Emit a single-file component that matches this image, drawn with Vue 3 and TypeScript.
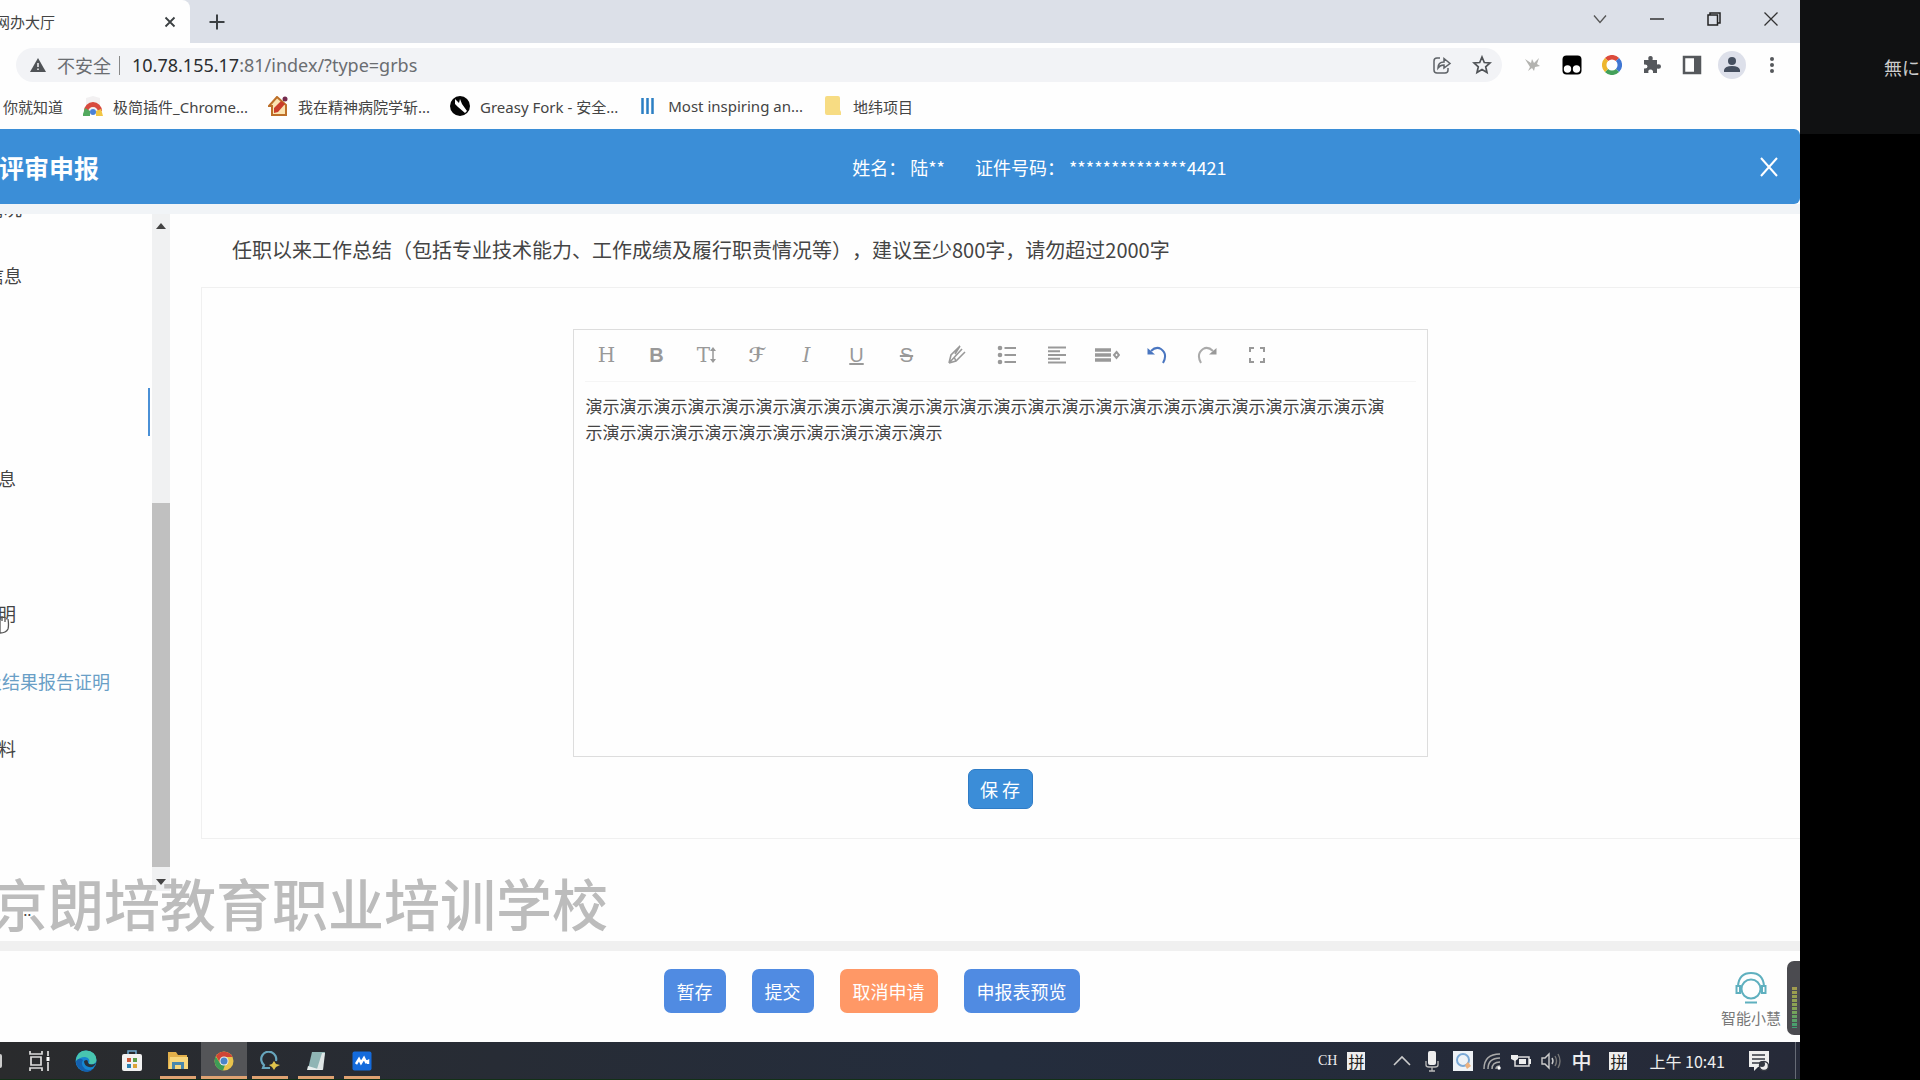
<script setup lang="ts">
import { ref } from 'vue'

interface MenuItem {
  text: string
  tone?: 'linked' | 'active'
  short?: boolean
}

const menu: MenuItem[] = [
  { text: '情况' },
  { text: '信息' },
  { text: '' },
  { text: '', tone: 'active' },
  { text: '息', short: true },
  { text: '' },
  { text: '明', short: true },
  { text: '及结果报告证明', tone: 'linked' },
  { text: '料', short: true },
]

const summary = ref('演示'.repeat(34))

const actions = [
  { label: '暂存', kind: 'primary' },
  { label: '提交', kind: 'primary' },
  { label: '取消申请', kind: 'warn' },
  { label: '申报表预览', kind: 'primary' },
]
</script>

<template>
  <div class="desktop">
    <div class="screen">
      <div class="tabs">
        <div class="tab">
          <span class="tab-title">网办大厅</span>
          <button class="bare tab-close" aria-label="关闭标签页">
            <svg width="12" height="12" viewBox="0 0 12 12"><path d="M1.500 1.500 10.500 10.500M10.500 1.500 1.500 10.500" stroke="#3c4043" stroke-width="1.800" /></svg>
          </button>
        </div>
        <button class="bare new-tab" aria-label="新标签页">
          <svg width="16" height="16" viewBox="0 0 16 16"><path d="M8 0.500V15.500M0.500 8H15.500" stroke="#3c4043" stroke-width="2" /></svg>
        </button>
        <div class="window-controls">
          <button class="bare" aria-label="搜索标签页">
            <svg width="14" height="14" viewBox="0 0 14 14"><path d="M1 3.500 7 10.500 13 3.500" fill="none" stroke="#555" stroke-width="1.300" /></svg>
          </button>
          <button class="bare" aria-label="最小化">
            <svg width="14" height="14" viewBox="0 0 14 14"><path d="M0 7H14" stroke="#333" stroke-width="1.500" /></svg>
          </button>
          <button class="bare" aria-label="还原">
            <svg width="14" height="14" viewBox="0 0 14 14"><path d="M1 3H10.500V13H1ZM3 3V1H13V11H10.500" fill="none" stroke="#222" stroke-width="1.500" /></svg>
          </button>
          <button class="bare" aria-label="关闭">
            <svg width="14" height="14" viewBox="0 0 14 14"><path d="M0.500 0.500 13.500 13.500M13.500 0.500 0.500 13.500" stroke="#333" stroke-width="1.300" /></svg>
          </button>
        </div>
      </div>

      <div class="toolbar">
        <div class="omnibox">
          <svg class="warn-icon" width="16" height="14" viewBox="0 0 16 14"><path d="M8 0 16 14H0Z" fill="#505357" /><path d="M8 5V9M8 10.500V12" stroke="#f3f4f6" stroke-width="1.500" /></svg>
          <span class="insecure">不安全</span>
          <span class="divider"></span>
          <span class="url"><b>10.78.155.17</b>:81/index/?type=grbs</span>
          <button class="bare share" aria-label="分享">
            <svg width="20" height="20" viewBox="0 0 20 20" fill="none" stroke="#5f6368" stroke-width="1.500"><path d="M8 3H5Q2 3 2 6V15Q2 18 5 18H13Q16 18 16 15V13" /><path d="M6 13Q6 7 12 7V3.500L18 8.500 12 13V10Q8 10 6 13Z" /></svg>
          </button>
          <button class="bare" aria-label="收藏">
            <svg width="20" height="20" viewBox="0 0 20 20" fill="none" stroke="#505357" stroke-width="1.700"><path d="M10 2 12.300 7.500 18 8 13.700 11.800 15 17.500 10 14.500 5 17.500 6.300 11.800 2 8 7.700 7.500Z" /></svg>
          </button>
        </div>
        <div class="extensions">
          <button class="bare" aria-label="扩展">
            <svg width="20" height="20" viewBox="0 0 20 20"><path d="M3 4 9 8 10 4 12 8 17 3 15 9 18 11 13 12 12 16 10 13 6 16 8 12Z" fill="#b3b3b0" /></svg>
          </button>
          <button class="bare" aria-label="脚本管理">
            <svg width="20" height="20" viewBox="0 0 20 20"><rect x="0.500" y="0.500" width="19" height="19" rx="4" fill="#000" /><circle cx="5.500" cy="14" r="3.700" fill="#fff" /><circle cx="14.500" cy="14" r="3.700" fill="#fff" /></svg>
          </button>
          <button class="bare" aria-label="彩环">
            <svg width="20" height="20" viewBox="0 0 20 20" fill="none" stroke-width="4.500"><path d="M4.500 4.500A7.700 7.700 0 0 1 15.500 4.500" stroke="#dc4b3c" /><path d="M15.500 4.500A7.700 7.700 0 0 1 15.500 15.500" stroke="#3f76d3" /><path d="M15.500 15.500A7.700 7.700 0 0 1 4.500 15.500" stroke="#43a05a" /><path d="M4.500 15.500A7.700 7.700 0 0 1 4.500 4.500" stroke="#eeb62d" /></svg>
          </button>
          <button class="bare" aria-label="扩展程序">
            <svg width="20" height="20" viewBox="0 0 20 20"><path d="M2 5H6.500Q5.500 1 8.500 1T10.500 5H15V9.500Q19 8.500 19 11.500T15 13.500V18H11Q11.500 14.500 8.500 14.500T6.500 18H2V13.500Q5.500 14 5.500 11.500T2 9.500Z" fill="#55585c" /></svg>
          </button>
          <button class="bare" aria-label="侧边栏">
            <svg width="20" height="20" viewBox="0 0 20 20"><path d="M2 2H18V18H2Z" fill="none" stroke="#55585c" stroke-width="2.500" /><path d="M12 2H18V18H12Z" fill="#55585c" /></svg>
          </button>
          <button class="bare avatar" aria-label="用户">
            <svg width="20" height="20" viewBox="0 0 20 20"><circle cx="10" cy="6" r="4" fill="#454f5f" /><path d="M2 17V15Q3 11 10 11T18 15V17Z" fill="#454f5f" /></svg>
          </button>
          <button class="bare" aria-label="更多">
            <svg width="20" height="20" viewBox="0 0 20 20" fill="#55585c"><circle cx="10" cy="4" r="2" /><circle cx="10" cy="10" r="2" /><circle cx="10" cy="16" r="2" /></svg>
          </button>
        </div>
      </div>

      <nav class="bookmarks">
        <a href="#">你就知道</a>
        <a href="#">
          <svg width="20" height="20" viewBox="0 0 20 20"><path d="M3 2 10 0 17 2V18H3Z" fill="#f2f0f1" /><path d="M1 15A9 9 0 0 1 19 15L15 16A5 5 0 0 0 5 16Z" fill="#d84a3e" /><path d="M0 18 2 12 7 15 7 20H0Z" fill="#52a95e" /><path d="M13 15 18 13 20 20H13Z" fill="#f1c644" /><circle cx="10" cy="16" r="3" fill="#4a82d8" /></svg>
          极简插件_Chrome...
        </a>
        <a href="#">
          <svg width="20" height="20" viewBox="0 0 20 20"><path d="M1 10 9 1 18 9V19H4V10Z" fill="#fbe3b0" stroke="#bd6f28" stroke-width="2" /><path d="M6 17 6 12 13 5 17 8 10 16Z" fill="#cb3d2a" /><circle cx="17" cy="3" r="2.500" fill="#742a4d" /></svg>
          我在精神病院学斩...
        </a>
        <a href="#">
          <svg width="20" height="20" viewBox="0 0 20 20"><circle cx="10" cy="10" r="10" fill="#050505" /><path d="M5 3 9 7 10 3 12 8 17 15 15 17 8 11 5 8Z" fill="#fff" /></svg>
          Greasy Fork - 安全...
        </a>
        <a href="#">
          <svg width="20" height="20" viewBox="0 0 20 20"><path d="M4.500 2V18M9.500 2V18M14.500 2V18" stroke="#2b7fc4" stroke-width="2.500" /></svg>
          Most inspiring an...
        </a>
        <a href="#">
          <svg width="20" height="20" viewBox="0 0 20 20"><path d="M4 0H15Q17 0 17 2V14L18 16V19H4Q2 19 2 17V2Q2 0 4 0Z" fill="#f7dc83" /></svg>
          地纬项目
        </a>
      </nav>

      <header class="page-head">
        <h1>评审申报</h1>
        <div class="person">
          <span>姓名：</span><span class="name">陆**</span>
          <span>证件号码：</span><span class="number">**************4421</span>
        </div>
        <button class="bare" aria-label="关闭页面">
          <svg width="18" height="20" viewBox="0 0 18 20"><path d="M1 1 17 19M17 1 1 19" stroke="#fff" stroke-width="2" /></svg>
        </button>
      </header>

      <div class="workspace">
        <aside class="side">
          <ul>
            <li v-for="(item, i) in menu" :key="i" :class="[item.tone, { short: item.short }]">
              <a v-if="item.text" href="#">{{ item.text }}</a>
            </li>
          </ul>
          <span class="more">...</span>
          <svg class="pointer" width="12" height="22" viewBox="0 0 12 22"><path d="M0 3V8M2 3V8M5 4V9M8 6Q9 12 8 16 6 20 0 20V8" fill="#fff" stroke="#555" stroke-width="1.300" /></svg>
        </aside>
        <div class="scrollbar">
          <svg width="10" height="6" viewBox="0 0 10 6"><path d="M0 6 5 0 10 6Z" fill="#444" /></svg>
          <div class="thumb"></div>
          <svg width="10" height="6" viewBox="0 0 10 6"><path d="M0 0H10L5 6Z" fill="#444" /></svg>
        </div>
        <main>
          <h2><label for="summary">任职以来工作总结（包括专业技术能力、工作成绩及履行职责情况等），建议至少800字，请勿超过2000字</label></h2>
          <section class="panel">
            <div class="editor">
              <div class="tools">
                <button class="bare slab" aria-label="标题">H</button>
                <button class="bare bold" aria-label="加粗">B</button>
                <button class="bare slab" aria-label="字号">T<svg width="6" height="16" viewBox="0 0 6 16"><path d="M3 2V14" stroke="#999" stroke-width="1.500" /><path d="M0 4 3 0 6 4ZM0 12 3 16 6 12Z" fill="#999" /></svg></button>
                <button class="bare script" aria-label="字体">ℱ</button>
                <button class="bare slab italic" aria-label="斜体">I</button>
                <button class="bare under" aria-label="下划线">U</button>
                <button class="bare strike" aria-label="删除线">S</button>
                <button class="bare" aria-label="文字颜色">
                  <svg width="20" height="20" viewBox="0 0 20 20" fill="none" stroke="#999" stroke-width="1.600"><path d="M2 18 4 10 13 1M2 18 9 16 18 7M2 18 15 4M7 12 9 16M13 1 8 9" /></svg>
                </button>
                <button class="bare" aria-label="列表">
                  <svg width="20" height="20" viewBox="0 0 20 20"><path d="M7.500 3H19M7.500 10H19M7.500 17H19" stroke="#999" stroke-width="2" /><g fill="#999"><circle cx="3" cy="3" r="2.300" /><circle cx="3" cy="10" r="2.300" /><circle cx="3" cy="17" r="2.300" /></g></svg>
                </button>
                <button class="bare" aria-label="对齐">
                  <svg width="20" height="20" viewBox="0 0 20 20"><path d="M1 2.500H19M1 6.300H13M1 10H19M1 13.700H13M1 17.500H19" stroke="#999" stroke-width="2" /></svg>
                </button>
                <button class="bare" aria-label="行高">
                  <svg width="26" height="20" viewBox="0 0 26 20"><path d="M1 5H17M1 10H17M1 15H17" stroke="#999" stroke-width="3.500" /><path d="M22.500 7 25 10 22.500 13 20 10Z" fill="none" stroke="#999" stroke-width="2" /></svg>
                </button>
                <button class="bare" aria-label="撤销">
                  <svg width="20" height="20" viewBox="0 0 20 20"><path d="M4 6Q9 1 14 4 21 9 16 18" fill="none" stroke="#4a76c0" stroke-width="2" /><path d="M0.500 3V9.500H8Z" fill="#4a76c0" /></svg>
                </button>
                <button class="bare" aria-label="重做">
                  <svg width="20" height="20" viewBox="0 0 20 20"><path d="M16 6Q11 1 6 4 -1 9 4 18" fill="none" stroke="#aaa" stroke-width="2" /><path d="M19.500 3V9.500H12Z" fill="#999" /></svg>
                </button>
                <button class="bare" aria-label="全屏">
                  <svg width="20" height="20" viewBox="0 0 20 20"><path d="M3 7V3H7M13 3H17V7M17 13V17H13M7 17H3V13" fill="none" stroke="#999" stroke-width="2" /></svg>
                </button>
              </div>
              <textarea id="summary" v-model="summary" spellcheck="false"></textarea>
            </div>
            <button class="save">保 存</button>
          </section>
        </main>
        <div class="watermark">京朗培教育职业培训学校</div>
      </div>

      <footer class="actions">
        <button v-for="a in actions" :key="a.label" :class="a.kind">{{ a.label }}</button>
        <a class="robot" href="#">
          <svg width="32" height="34" viewBox="0 0 32 34" fill="none" stroke="#5fb0bf" stroke-width="2"><circle cx="16" cy="18" r="9.500" /><path d="M3 15Q4 2 16 2T29 15" /><path d="M1.500 15H5V22H1.500ZM27 15H30.500V22H27Z" /><path d="M10 31.500H22" /></svg>
          智能小慧
        </a>
        <div class="meter"><span></span></div>
      </footer>

      <div class="taskbar">
        <div class="apps">
          <button class="bare cortana" aria-label="Cortana"><span></span></button>
          <button class="bare" aria-label="任务视图">
            <svg width="22" height="20" viewBox="0 0 22 20" fill="none" stroke="#ddd" stroke-width="1.700"><path d="M1 0V3H13V0M1 20V17H13V20M2 6H12V14H2ZM19 0V5M19 11V20" /><path d="M19 6V10" stroke="#fff" stroke-width="3" /></svg>
          </button>
          <button class="bare" aria-label="Edge">
            <svg width="22" height="22" viewBox="0 0 22 22"><circle cx="11" cy="11" r="10.500" fill="#1686d0" /><path d="M1 9Q3 0.500 11 0.500 21 1 21.500 10 21 15 14 14 16 8 10 7 4 7 1 12Z" fill="#48c6b0" /><path d="M8 10Q5 15 10 19 14 21 18 19 14 24 7 20.500 1 17 1 11 4 7 8 10Z" fill="#1460ae" /><path d="M9 11Q13 8 13 13 16 16 21 13 19 18 14 17 9 16 9 11Z" fill="#29313a" /></svg>
          </button>
          <button class="bare" aria-label="商店">
            <svg width="20" height="22" viewBox="0 0 20 22"><path d="M6 4V1H14V4" fill="none" stroke="#6fa9d0" stroke-width="1.500" /><rect y="4" width="20" height="17" rx="2" fill="#f2f2f2" /><path d="M5 8H9V12H5Z" fill="#cf5a3a" /><path d="M11 8H15V12H11Z" fill="#5b9e49" /><path d="M5 14H9V18H5Z" fill="#2c83b4" /><path d="M11 14H15V18H11Z" fill="#dba438" /></svg>
          </button>
          <button class="bare open" aria-label="文件管理器">
            <svg width="20" height="20" viewBox="0 0 20 20"><path d="M0 1H8L10 4H19V18H0Z" fill="#e2b04b" /><path d="M2 6H20V18H1Z" fill="#f7d67c" /><path d="M4 18V11H16V18H13V14H7V18Z" fill="#4987ad" /></svg>
          </button>
          <button class="bare open current" aria-label="Chrome">
            <svg width="20" height="20" viewBox="0 0 20 20"><circle cx="10" cy="10" r="9.500" fill="#e9c34c" /><path d="M2 5A9.500 9.500 0 0 1 18.500 6H10L6 12Z" fill="#cf4536" /><path d="M1.700 5.500 6.500 13 11 14 9 19.500A9.500 9.500 0 0 1 1.700 5.500Z" fill="#3e9b56" /><circle cx="10" cy="10" r="4.500" fill="#eee" /><circle cx="10" cy="10" r="3.500" fill="#4b84c9" /></svg>
          </button>
          <button class="bare open" aria-label="搜索">
            <svg width="20" height="20" viewBox="0 0 20 20"><path d="M10 17H3L4 14A7.500 7.500 0 1 1 16 10" fill="none" stroke="#67a6bd" stroke-width="2.200" /><path d="M14 10 16 13 20 14 16 16 14 19 12 16 9 14 12 13Z" fill="#dfc34b" /></svg>
          </button>
          <button class="bare open" aria-label="记事本">
            <svg width="20" height="20" viewBox="0 0 20 20"><path d="M6 1H19L16 18H2Z" fill="#8fb5b5" /><path d="M16 2H19L17 19 11 18Z" fill="#dfe6e6" /><path d="M2 15 12 18 16 18V19H1Z" fill="#e8eeee" /></svg>
          </button>
          <button class="bare open" aria-label="会议">
            <svg width="20" height="20" viewBox="0 0 20 20"><rect x="0.500" y="0.500" width="19" height="19" rx="2" fill="#146bdc" /><path d="M4 13 7 8 9 12 12 7 14 11 16 10V13" fill="none" stroke="#fff" stroke-width="2.500" /></svg>
          </button>
        </div>
        <div class="tray">
          <span class="ch">CH</span>
          <span class="pin">拼</span>
          <svg class="up" width="18" height="18" viewBox="0 0 18 18"><path d="M1 13 9 5 17 13" fill="none" stroke="#ccc" stroke-width="1.600" /></svg>
          <svg class="mic" width="14" height="22" viewBox="0 0 14 22"><rect x="3" y="1" width="8" height="14" rx="2" fill="#eee" /><path d="M1 11V15Q1 17 4 17H10Q13 17 13 15V11M7 17V21M4 21H10" fill="none" stroke="#bbb" stroke-width="1.300" /></svg>
          <svg width="20" height="20" viewBox="0 0 20 20"><rect width="20" height="20" fill="#eef2f6" /><circle cx="10" cy="9" r="6" fill="none" stroke="#7ba9d6" stroke-width="2" /><path d="M12 14 15 11 18 15 14 18Z" fill="#ecb07d" /></svg>
          <svg width="18" height="18" viewBox="0 0 18 18" fill="none" stroke="#aaa" stroke-width="1.500"><path d="M1 17Q1 2 17 2M5 17Q5 6 17 6M9 17Q9 10 17 10M13 17Q13 14 17 14" /><circle cx="16" cy="16" r="1" fill="#fff" stroke="#fff" /></svg>
          <svg width="20" height="16" viewBox="0 0 20 16"><path d="M4 4H18V13H4Z" fill="none" stroke="#ddd" stroke-width="1.500" /><path d="M8 6H15V11H8ZM18 6H20V11H18ZM0 2H7V6L4 8 0 6Z" fill="#eee" /></svg>
          <svg width="20" height="18" viewBox="0 0 20 18" fill="none" stroke="#ccc" stroke-width="1.400"><path d="M1 6H4L8 2V16L4 12H1ZM11 6Q13 9 11 12" /><path d="M14 4Q17 9 14 14M17 2Q21 9 17 16" stroke="#777" /></svg>
          <span class="zh">中</span>
          <span class="pin">拼</span>
          <time>上午 10:41</time>
          <svg width="22" height="22" viewBox="0 0 22 22"><path d="M1 1H21V17H10L6 21V17H1Z" fill="#eee" /><path d="M4 5H17M4 9H17M4 13H12" stroke="#353942" stroke-width="1.600" /><circle cx="16" cy="16" r="4.500" fill="#eee" stroke="#353942" stroke-width="1.500" /><circle cx="14" cy="14" r="3" fill="#353942" /></svg>
        </div>
      </div>
    </div>

    <aside class="participants"><div>無に</div></aside>
  </div>
</template>

<style>
body {
  background: #000;
}
</style>

<style scoped>
.desktop {
  display: flex;
  min-height: 100vh;
  overflow: hidden;
  font-family: "Noto Sans CJK SC", sans-serif;
  font-size: 18px;
  color: #444;
}
.desktop * {
  box-sizing: border-box;
}
.desktop svg {
  flex: none;
}
button {
  font: inherit;
}
a {
  color: inherit;
  text-decoration: none;
}
.bare {
  display: flex;
  align-items: center;
  justify-content: center;
  padding: 0;
  border: 0;
  background: none;
}
.screen {
  display: flex;
  flex: 1;
  flex-direction: column;
  min-width: 0;
  background: #fefefe;
}

.tabs {
  display: flex;
  height: 43px;
  background: #dce0e8;
}
.tab {
  display: flex;
  align-items: center;
  justify-content: space-between;
  width: 190px;
  padding-right: 14px;
  border-radius: 0 8px 0 0;
  background: #fefefe;
  font-size: 15px;
}
.tab-title {
  margin-left: -5px;
}
.new-tab {
  width: 54px;
}
.window-controls {
  display: flex;
  align-items: center;
  gap: 43px;
  height: 37px;
  margin-left: auto;
  padding-right: 22px;
}

.toolbar {
  display: flex;
  align-items: center;
  gap: 20px;
  height: 44px;
  padding: 0 18px 0 16px;
}
.omnibox {
  display: flex;
  flex: 1;
  align-items: center;
  height: 34px;
  padding: 0 10px 0 14px;
  border-radius: 17px;
  background: #f2f3f6;
  color: #6a6d71;
}
.insecure {
  margin-left: 11px;
}
.divider {
  width: 1px;
  height: 19px;
  margin: 0 12px 0 8px;
  background: #888;
}
.url {
  font-family: "Noto Sans", sans-serif;
}
.url b {
  font-weight: 400;
  color: #2b2d30;
}
.share {
  margin-right: 20px;
  margin-left: auto;
}
.extensions {
  display: flex;
  align-items: center;
  gap: 20px;
}
.avatar {
  width: 28px;
  height: 28px;
  margin: 0 -4px;
  border-radius: 50%;
  background: #dde0ea;
}

.bookmarks {
  display: flex;
  align-items: center;
  gap: 20px;
  height: 42px;
  padding: 0 0 4px 3px;
  font-family: "Noto Sans", "Noto Sans CJK SC", sans-serif;
  font-size: 15px;
}
.bookmarks a {
  display: flex;
  align-items: center;
  gap: 10px;
  white-space: nowrap;
}

.page-head {
  display: flex;
  align-items: center;
  justify-content: space-between;
  height: 75px;
  padding-right: 22px;
  border-radius: 0 6px 6px 0;
  background: #3b8ed7;
  color: #fff;
}
h1 {
  margin: 0 0 0 -1px;
  font-size: 25px;
  line-height: 36px;
}
.person {
  display: flex;
  margin-right: 30%;
  margin-left: auto;
  white-space: nowrap;
}
.name {
  margin: 0 30px 0 4px;
}
.number {
  margin-left: 4px;
}

.workspace {
  position: relative;
  display: flex;
  flex: 1;
  border-top: 10px solid #f1f4f7;
  border-bottom: 10px solid #f0f0f0;
}
.side {
  position: relative;
  width: 152px;
  overflow: hidden;
}
.side ul {
  display: grid;
  grid-auto-rows: 1fr;
  height: 608px;
  margin: -38px 0 0;
  padding: 0;
  list-style: none;
}
.side li {
  display: flex;
  align-items: center;
  padding-right: 2px;
}
.side li a {
  margin-left: -14px;
  padding-bottom: 4px;
}
.side li.short a {
  margin-left: -2px;
}
.side li.linked a {
  margin-left: -16px;
  color: #6a9fc6;
}
.side li.active::after {
  width: 2px;
  height: 48px;
  margin-left: auto;
  background: #4a90d6;
  content: "";
}
.more {
  position: absolute;
  top: 686px;
  left: 19px;
  font-size: 15px;
  line-height: 20px;
}
.pointer {
  position: absolute;
  top: 399px;
  left: 0;
}
.scrollbar {
  display: flex;
  flex-direction: column;
  align-items: center;
  justify-content: space-between;
  width: 18px;
  margin-bottom: 50px;
  padding: 9px 0 6px;
  background: #f0f1f2;
}
.thumb {
  align-self: stretch;
  flex: none;
  height: 55%;
  margin-top: auto;
  margin-bottom: 12px;
  background: #c0c0c0;
}
main {
  flex: 1;
  min-width: 0;
  padding-left: 31px;
}
h2 {
  display: flex;
  align-items: center;
  height: 73px;
  margin: 0;
  padding: 0 0 2px 31px;
  font-size: 20px;
  font-weight: 400;
  white-space: nowrap;
  text-spacing-trim: space-all;
}
.panel {
  display: flex;
  flex-direction: column;
  align-items: center;
  gap: 12px;
  padding: 41px 2px 29px 0;
  border: solid #f0f0f0;
  border-width: 1px 0 1px 1px;
}
.editor {
  display: flex;
  flex-direction: column;
  width: 100%;
  max-width: 855px;
  height: 428px;
  border: 1px solid #ddd;
}
.tools {
  display: flex;
  height: 52px;
  margin: 0 11px;
  padding-bottom: 1px;
  border-bottom: 1px solid #f5f5f5;
}
.tools button {
  width: 50px;
  color: #999;
}
.tools button:first-child {
  margin-left: -3px;
}
.slab {
  font-family: "DejaVu Serif", serif;
  font-size: 20px;
}
.bold,
.under,
.strike {
  font-family: "Liberation Sans", sans-serif;
  font-size: 20px;
}
.bold {
  font-weight: 700;
}
.italic {
  font-style: italic;
}
.script {
  font-family: "DejaVu Sans", "DejaVu Serif", serif;
  font-size: 20px;
  font-weight: 700;
}
.under {
  text-decoration: underline;
}
.strike {
  text-decoration: line-through;
}
textarea {
  flex: 1;
  padding: 11px 29px 11px 12px;
  border: 0;
  outline: 0;
  resize: none;
  background: none;
  color: #444;
  font-family: inherit;
  font-size: 17px;
  line-height: 26px;
}
.save {
  width: 65px;
  height: 40px;
  padding: 0;
  border: 1px solid #2f7cc6;
  border-radius: 7px;
  background: #3b8dd8;
  color: #fff;
}
.watermark {
  position: absolute;
  bottom: 3px;
  left: -8px;
  color: #bcbcbc;
  font-size: 56px;
  font-weight: 500;
  line-height: 72px;
  white-space: nowrap;
  pointer-events: none;
}

.actions {
  position: relative;
  display: flex;
  align-items: center;
  justify-content: center;
  gap: 26px;
  height: 91px;
  padding: 0 57px 11px 0;
}
.actions button {
  height: 44px;
  padding: 0 13px;
  border: 0;
  border-radius: 7px;
  background: #508be2;
  color: #fff;
}
.actions .warn {
  background: #ff9866;
}
.robot {
  position: absolute;
  top: 20px;
  right: 19px;
  display: flex;
  flex-direction: column;
  align-items: center;
  gap: 2px;
  color: #777;
  font-size: 15px;
  line-height: 22px;
}
.meter {
  position: absolute;
  top: 10px;
  right: 0;
  display: flex;
  align-items: flex-end;
  width: 13px;
  height: 74px;
  padding: 7px 3px 7px 5px;
  border-radius: 7px 0 0 7px;
  background: #4b4b50;
}
.meter span {
  width: 5px;
  height: 41px;
  background: repeating-linear-gradient(transparent 0 3px, #4b4b50 3px 4px), linear-gradient(#a39c4e, #87a454, #3d9e72);
}

.taskbar {
  display: flex;
  justify-content: space-between;
  height: 38px;
  border-bottom: 1px solid #123016;
  background: linear-gradient(90deg, #2a2b2d, #242d3d 55%, #262a38);
  color: #eee;
}
.apps {
  display: flex;
}
.apps button {
  width: 36px;
  margin-right: 10px;
}
.apps .cortana {
  width: 2px;
  margin-right: 20px;
}
.cortana span {
  width: 2px;
  height: 14px;
  border-radius: 0 2px 2px 0;
  background: #ccc;
}
.apps .open {
  border-top: 3px solid transparent;
  border-bottom: 3px solid #dfa272;
}
.apps .current {
  width: 46px;
  margin: 0 5px 0 -5px;
  background: #545558;
}
.tray {
  display: flex;
  align-items: center;
  gap: 10px;
  padding-right: 25px;
  margin-right: 4px;
  border-right: 1px solid #666b75;
}
.ch {
  font-family: "Liberation Serif", serif;
  font-size: 14px;
}
.pin {
  padding: 0 1px;
  background: #eee;
  color: #222;
  font-size: 16px;
  line-height: 18px;
}
.up {
  margin: 0 4px 0 18px;
}
.mic {
  margin-right: 4px;
}
.zh {
  font-size: 20px;
  font-weight: 500;
  line-height: 24px;
}
.zh + .pin {
  margin-left: 8px;
}
time {
  margin: 0 13px 0 12px;
  font-size: 16px;
}

.participants {
  width: 120px;
  overflow: hidden;
  background: #000;
}
.participants div {
  height: 134px;
  padding-left: 84px;
  background: #101112;
  color: #ccc;
  font-family: "Noto Sans CJK JP", sans-serif;
  line-height: 134px;
  white-space: nowrap;
}
</style>
